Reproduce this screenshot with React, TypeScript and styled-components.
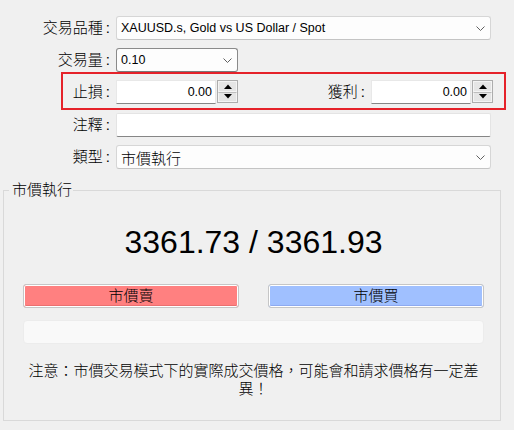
import React from "react";
import styled, { createGlobalStyle } from "styled-components";

const LATIN = `"Liberation Sans", Arial, sans-serif`;
const UI = `"Liberation Sans", "Noto Sans CJK TC", sans-serif`;

const GlobalStyle = createGlobalStyle`
  html, body { margin: 0; padding: 0; background: #f0f0f0; }
  *, *::before, *::after { box-sizing: border-box; }
`;

const Window = styled.div`
  width: 514px;
  height: 430px;
  overflow: hidden;
  background: #f0f0f0;
  font-family: ${UI};
  font-size: 15px;
  font-weight: 300;
  color: #000;
  display: flex;
  flex-direction: column;
`;

const Row = styled.div<{ $top: number }>`
  display: grid;
  grid-template-columns: 110px 1fr;
  column-gap: 6px;
  align-items: center;
  height: 24px;
  margin-top: ${(p) => p.$top}px;
  padding-right: 23px;
`;

const Highlight = styled.div`
  margin: 0 8px 0 61px;
  border: 2px solid #e5222a;
  padding: 6px 11px 4px 0;
  display: grid;
  grid-template-columns: 47px 122px 1fr 122px;
  column-gap: 6px;
  align-items: center;
`;

const Label = styled.span`
  text-align: right;
  white-space: nowrap;
  line-height: 20px;
`;

const Colon = styled.span`
  margin-left: 3px;
  font-weight: 400;
`;

const Combo = styled.div<{ $width?: number; $focused?: boolean }>`
  display: flex;
  align-items: center;
  justify-content: space-between;
  width: ${(p) => (p.$width ? `${p.$width}px` : "auto")};
  height: 24px;
  padding: 0 5px 0 4px;
  background: #fdfdfd;
  border: 1px solid ${(p) => (p.$focused ? "#8a8a8a" : "#d6d6d6")};
  border-bottom-color: ${(p) => (p.$focused ? "#7a7a7a" : "#c4c4c4")};
  border-radius: 3px;
`;

const ComboText = styled.span<{ $latin?: boolean }>`
  font-family: ${(p) => (p.$latin ? LATIN : UI)};
  font-size: ${(p) => (p.$latin ? "12.5px" : "15px")};
  font-weight: ${(p) => (p.$latin ? 400 : 300)};
  white-space: nowrap;
`;

const TextBox = styled.div`
  height: 24px;
  background: #fff;
  border: 1px solid #e4e4e4;
  border-bottom-color: #868686;
  border-radius: 2px;
`;

const SpinBox = styled.div`
  display: flex;
  height: 24px;
`;

const NumField = styled.div`
  flex: 1;
  display: flex;
  align-items: center;
  justify-content: flex-end;
  padding-right: 3px;
  background: #fff;
  border: 1px solid #e8e8e8;
  border-bottom-color: #868686;
  font-family: ${LATIN};
  font-size: 12.5px;
  font-weight: 400;
`;

const Spinner = styled.div`
  width: 21px;
  margin-left: 1px;
  height: 23px;
  display: flex;
  flex-direction: column;
  border: 1px solid #adadad;
  background: #e6e6e6;
`;

const SpinButton = styled.div<{ $down?: boolean }>`
  flex: 1;
  display: flex;
  align-items: center;
  justify-content: center;
  border: 1px solid #f4f4f4;
  border-top: ${(p) => (p.$down ? "1px solid #bdbdbd" : "1px solid #f4f4f4")};
  background: #e5e5e5;
`;

const Group = styled.fieldset`
  margin: 13px 13px 0 3px;
  padding: 0;
  border: 1px solid #d9d9d9;
  height: 239px;
  min-width: 0;
`;

const Legend = styled.legend`
  margin-left: 5px;
  padding: 0 1px 0 3px;
  line-height: 16px;
  font-size: 15px;
`;

const Body = styled.div`
  display: flex;
  flex-direction: column;
  padding: 0 16px 0 19px;
`;

const Price = styled.div`
  margin-top: 24px;
  font-family: ${LATIN};
  font-size: 32px;
  font-weight: 400;
  line-height: 40px;
  text-align: center;
`;

const Actions = styled.div`
  margin-top: 22px;
  display: grid;
  grid-template-columns: 1fr 1fr;
  column-gap: 29px;
`;

const ActionButton = styled.button<{ $tone: "sell" | "buy" }>`
  height: 24px;
  padding: 0;
  border: 1px solid #c6c6c6;
  border-radius: 3px;
  background: ${(p) => (p.$tone === "sell" ? "#ff8080" : "#a0c0ff")};
  box-shadow: inset 0 0 0 1px #ffffff,
    inset 0 -2px 0 ${(p) => (p.$tone === "sell" ? "#ea7070" : "#8eaaf0")};
  font-family: ${UI};
  font-size: 15px;
  font-weight: 300;
  color: #000;
  line-height: 20px;
`;

const StatusBar = styled.div`
  margin-top: 12px;
  height: 24px;
  background: #f9f9f9;
  border: 1px solid #ececec;
  border-radius: 4px;
`;

const Note = styled.p`
  margin: 18px 0 0;
  line-height: 18px;
  text-align: center;
  font-size: 15px;
`;

const Chevron = () => (
  <svg width="9" height="5" viewBox="0 0 9 5">
    <polyline points="0.5,0.5 4.5,4.5 8.5,0.5" fill="none" stroke="#606060" strokeWidth="1" />
  </svg>
);

const Triangle = ({ down }: { down?: boolean }) => (
  <svg width="8" height="5" viewBox="0 0 8 5">
    {down ? <polygon points="0,0 8,0 4,4.5" fill="#000" /> : <polygon points="4,0.5 8,5 0,5" fill="#000" />}
  </svg>
);

const Spin = ({ value }: { value: string }) => (
  <SpinBox>
    <NumField>{value}</NumField>
    <Spinner>
      <SpinButton>
        <Triangle />
      </SpinButton>
      <SpinButton $down>
        <Triangle down />
      </SpinButton>
    </Spinner>
  </SpinBox>
);

const FieldLabel = ({ text }: { text: string }) => (
  <Label>
    {text}
    <Colon>:</Colon>
  </Label>
);

export default function App() {
  return (
    <Window>
      <GlobalStyle />
      <Row $top={16}>
        <FieldLabel text="交易品種" />
        <Combo>
          <ComboText $latin>XAUUSD.s, Gold vs US Dollar / Spot</ComboText>
          <Chevron />
        </Combo>
      </Row>
      <Row $top={8}>
        <FieldLabel text="交易量" />
        <Combo $width={122} $focused>
          <ComboText $latin>0.10</ComboText>
          <Chevron />
        </Combo>
      </Row>
      <Highlight>
        <FieldLabel text="止損" />
        <Spin value="0.00" />
        <FieldLabel text="獲利" />
        <Spin value="0.00" />
      </Highlight>
      <Row $top={3}>
        <FieldLabel text="注釋" />
        <TextBox />
      </Row>
      <Row $top={8}>
        <FieldLabel text="類型" />
        <Combo>
          <ComboText>市價執行</ComboText>
          <Chevron />
        </Combo>
      </Row>
      <Group>
        <Legend>市價執行</Legend>
        <Body>
          <Price>3361.73 / 3361.93</Price>
          <Actions>
            <ActionButton $tone="sell">市價賣</ActionButton>
            <ActionButton $tone="buy">市價買</ActionButton>
          </Actions>
          <StatusBar />
          <Note>注意：市價交易模式下的實際成交價格，可能會和請求價格有一定差異！</Note>
        </Body>
      </Group>
    </Window>
  );
}
